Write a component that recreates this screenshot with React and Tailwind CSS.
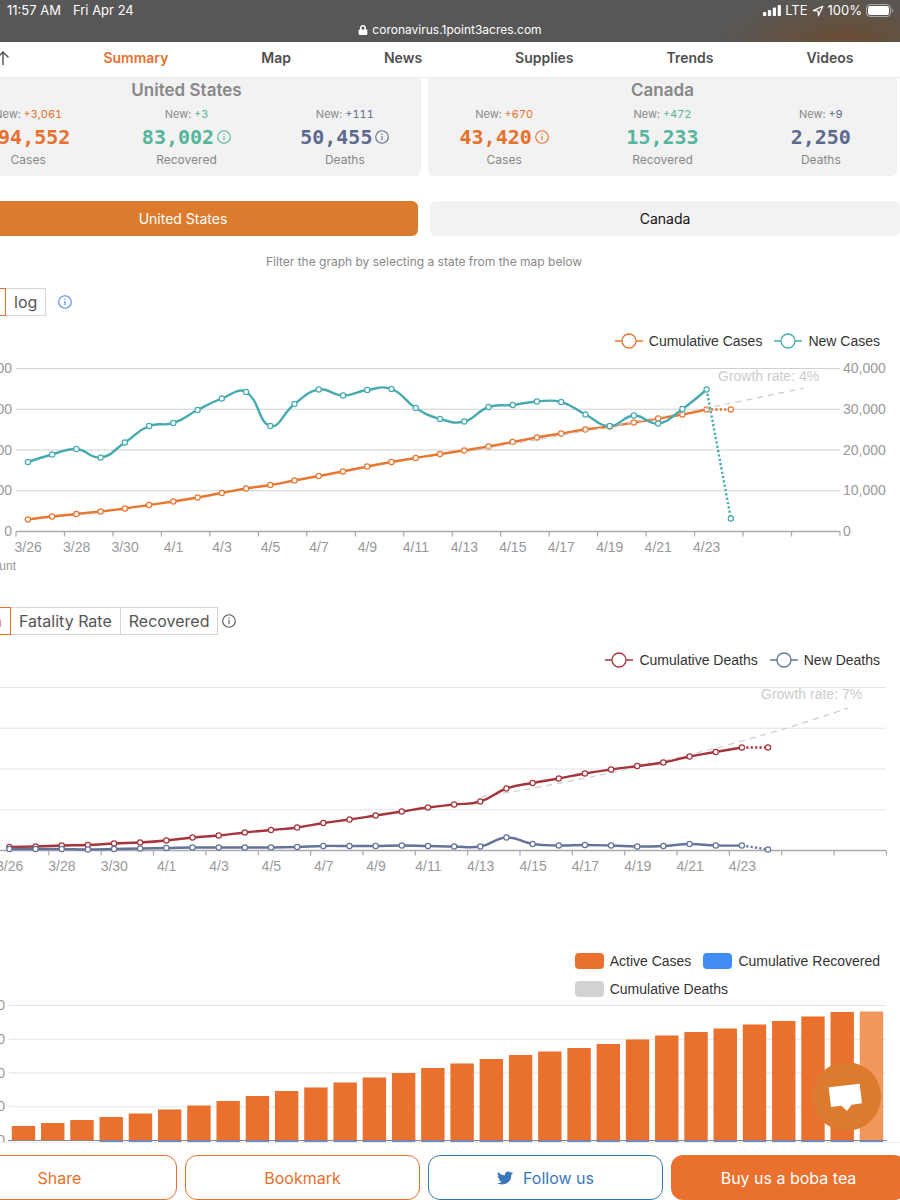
import { FaLock, FaTwitter } from "react-icons/fa";

const navItems = ["Summary", "Map", "News", "Supplies", "Trends", "Videos"];

const countries = [
  {
    name: "United States",
    stats: [
      { label: "Cases", added: "+3,061", total: "894,552", color: "text-[#e8702d]" },
      { label: "Recovered", added: "+3", total: "83,002", color: "text-[#55b59b]", info: true },
      { label: "Deaths", added: "+111", total: "50,455", color: "text-[#5d6a8f]", info: true },
    ],
  },
  {
    name: "Canada",
    stats: [
      { label: "Cases", added: "+670", total: "43,420", color: "text-[#e8702d]", info: true },
      { label: "Recovered", added: "+472", total: "15,233", color: "text-[#55b59b]" },
      { label: "Deaths", added: "+9", total: "2,250", color: "text-[#5d6a8f]" },
    ],
  },
];

const dates = [
  "3/26", "3/28", "3/30", "4/1", "4/3", "4/5", "4/7", "4/9",
  "4/11", "4/13", "4/15", "4/17", "4/19", "4/21", "4/23",
];

// heights above the x axis, one per day
const cumulativeCases = [
  12, 15, 17.5, 20, 23, 26.5, 30, 34, 38.5, 43, 46.5, 51, 55.5, 60, 65,
  69.5, 73.5, 77.5, 81, 85, 89.5, 94, 98, 102, 105, 109, 113, 117, 122, 122,
];
const newCases = [
  69.5, 77, 82.5, 74, 89, 105.5, 108.5, 121.5, 133, 139.5, 105.5, 127.5, 142, 136, 141.5,
  142.5, 123.5, 112.5, 110, 124.5, 126.5, 130, 129.5, 117, 105.5, 116, 108, 122.5, 142, 13,
];
const cumulativeDeaths = [
  3.5, 4, 5, 5.5, 7, 8, 10, 13, 15, 18, 20.5, 23, 27.5, 31, 35,
  39, 43, 46, 49, 62, 67.5, 72, 77, 81, 84.5, 88, 94, 98.5, 103, 103,
];
const newDeaths = [
  1.5, 1.5, 1.5, 1, 1.5, 2, 2.5, 3, 3, 3, 3, 3.5, 4.5, 4.5, 4.5,
  5, 4.5, 4, 4, 13, 6.5, 5, 5.5, 5, 4, 4.5, 6.5, 5, 5, 1,
];
const activeCases = [
  14.5, 17.5, 20.5, 23.5, 27, 31, 35, 39.5, 44.5, 49.5, 53, 58, 63, 67.5, 72.5,
  77, 81.5, 85.5, 89, 92.5, 96.5, 101, 105, 108.5, 112, 116, 119.5, 124, 128.5, 129,
];

const smoothPath = (pts) => {
  let d = `M${pts[0][0]},${pts[0][1]}`;
  let out = pts[0];
  for (let i = 1; i < pts.length; i++) {
    const prev = pts[i - 1];
    const p = pts[i];
    const next = pts[i + 1];
    if (!next) {
      d += ` C${out[0]},${out[1]} ${p[0]},${p[1]} ${p[0]},${p[1]}`;
      break;
    }
    const lenPrev = Math.hypot(p[0] - prev[0], p[1] - prev[1]);
    const lenNext = Math.hypot(next[0] - p[0], next[1] - p[1]);
    const ratio = lenNext / (lenNext + lenPrev);
    const [vx, vy] = [(next[0] - prev[0]) * 0.45, (next[1] - prev[1]) * 0.45];
    d += ` C${out[0]},${out[1]} ${p[0] - vx * (1 - ratio)},${p[1] - vy * (1 - ratio)} ${p[0]},${p[1]}`;
    out = [p[0] + vx * ratio, p[1] + vy * ratio];
  }
  return d;
};

const InfoIcon = ({ className = "" }) => (
  <svg viewBox="0 0 14 14" className={`size-[14px] shrink-0 ${className}`} fill="none" stroke="currentColor">
    <circle cx="7" cy="7" r="6.3" strokeWidth="1.1" />
    <path d="M7 6v4.2" strokeWidth="1.1" />
    <circle cx="7" cy="4.2" r="0.7" fill="currentColor" stroke="none" />
  </svg>
);

const StatusBar = () => (
  <header className="shrink-0 bg-[#575757] bg-[radial-gradient(130px_50px_at_94%_100%,#6b4d32,#575757)] text-white text-[13px]">
    <div className="flex items-center justify-between h-[21px] pl-[7px] pr-[6px]">
      <div className="flex gap-3">
        <span>11:57 AM</span>
        <span>Fri Apr 24</span>
      </div>
      <div className="flex items-center gap-1">
        <svg viewBox="0 0 18 11" className="w-[18px] h-[11px]" fill="currentColor">
          <rect x="0" y="7" width="3.2" height="4" rx="0.8" />
          <rect x="4.9" y="5" width="3.2" height="6" rx="0.8" />
          <rect x="9.8" y="2.6" width="3.2" height="8.4" rx="0.8" />
          <rect x="14.7" y="0" width="3.2" height="11" rx="0.8" />
        </svg>
        <span>LTE</span>
        <svg viewBox="0 0 12 12" className="size-[12px]" fill="none" stroke="currentColor" strokeWidth="1.2" strokeLinejoin="round">
          <path d="M10.8 1.2 1.2 5.6l4.9.4.3 4.8z" />
        </svg>
        <span>100%</span>
        <svg viewBox="0 0 28 13" className="w-[28px] h-[13px]" fill="none">
          <rect x="0.5" y="0.5" width="24" height="12" rx="3.5" stroke="#aaa" />
          <rect x="2" y="2" width="21" height="9" rx="2.2" fill="#fff" />
          <path d="M26 4.5c1.6.6 1.6 3.4 0 4z" fill="#aaa" />
        </svg>
      </div>
    </div>
    <div className="flex items-center justify-center gap-1 h-[21px] pb-1 text-xs">
      <FaLock className="size-[10px]" />
      <span>coronavirus.1point3acres.com</span>
    </div>
  </header>
);

const NavBar = () => (
  <nav className="shrink-0 -ml-[50px] flex items-center justify-around h-9 pb-1 border-b border-[#ececec] text-sm font-semibold text-[#4f4f4f]">
    <button aria-label="Back to top">
      <svg viewBox="0 0 14 16" className="w-[14px] h-[16px]" fill="none" stroke="currentColor" strokeWidth="1.4">
        <path d="M7 15V2M1.5 7.5 7 2l5.5 5.5" />
      </svg>
    </button>
    {navItems.map((item, i) => (
      <a key={item} href="#" className={i === 0 ? "text-[#e8702d]" : ""}>
        {item}
      </a>
    ))}
  </nav>
);

const CountryCard = ({ country }) => (
  <div className="h-[98px] bg-[#f2f2f2] rounded-b-md text-center text-[#888]">
    <h2 className="text-[17px] leading-6 font-semibold">{country.name}</h2>
    <div className="-mx-[3px] grid grid-cols-3">
      {country.stats.map((s) => (
        <div key={s.label}>
          <p className="text-[11px] leading-6 tabular-nums">
            New: <span className={s.color}>{s.added}</span>
          </p>
          <p className={`flex items-center justify-center gap-[3px] h-[22px] ${s.color}`}>
            <span className="font-['DejaVu_Sans_Mono',monospace] text-xl font-bold">{s.total}</span>
            {s.info && <InfoIcon />}
          </p>
          <p className="text-xs leading-6">{s.label}</p>
        </div>
      ))}
    </div>
  </div>
);

const LineLegend = ({ items }) => (
  <div className="flex justify-end gap-3 pr-5 h-5 font-['Liberation_Sans',Arial,sans-serif] text-sm leading-5 text-[#333]">
    {items.map(({ label, color }) => (
      <button key={label} className="flex items-center gap-[6px]">
        <svg viewBox="0 0 28 16" className="w-7 h-4" stroke={color} fill="#fff">
          <path d="M0 8h28" strokeWidth="1.5" />
          <circle cx="14" cy="8" r="7" strokeWidth="1.3" />
        </svg>
        {label}
      </button>
    ))}
  </div>
);

const BarLegendItem = ({ label, color }) => (
  <button className="flex items-center gap-[6px]">
    <span className={`w-[29px] h-4 rounded-[4px] ${color}`} />
    {label}
  </button>
);

const Series = ({ values, color, x0, step, base }) => {
  const pts = values.map((v, i) => [x0 + step * i, base - v]);
  const [last, today] = pts.slice(-2);
  return (
    <g stroke={color} fill="none">
      <path d={smoothPath(pts.slice(0, -1))} strokeWidth="2.4" />
      <path d={`M${last} L${today}`} strokeWidth="2.4" strokeDasharray="2.2 2.2" />
      {pts.map(([x, y]) => (
        <circle key={x} cx={x} cy={y} r="2.6" fill="#fff" strokeWidth="1.2" />
      ))}
    </g>
  );
};

const Axes = ({ x1, x2, tick0, step, base, gap, grid }) => (
  <>
    {[1, 2, 3, 4].map((n) => (
      <path key={n} d={`M${x1} ${base - gap * n}H${x2}`} stroke={grid} strokeWidth="1.2" />
    ))}
    <path d={`M${x1} ${base}H${x2}`} stroke="#aaa" strokeWidth="1.3" />
    {Array.from({ length: 18 }, (_, i) => (
      <path key={i} d={`M${tick0 + step * i} ${base}v5`} stroke="#aaa" strokeWidth="1.2" />
    ))}
    {dates.map((d, i) => (
      <text key={d} x={tick0 + step * (i + 0.25)} y={base + 20.5} textAnchor="middle">
        {d}
      </text>
    ))}
  </>
);

const chartClass = "block w-full font-['Liberation_Sans',Arial,sans-serif] text-sm";

const CasesChart = () => (
  <svg viewBox="0 0 900 229" className={chartClass} fill="#999">
    <Axes x1={16} x2={840} tick0={16} step={48.47} base={180.5} gap={40.75} grid="#d0d0d0" />
    {["0", "300,000", "600,000", "900,000", "1,200,000"].map((t, i) => (
      <text key={t} x="12" y={185 - 40.75 * i} textAnchor="end">{t}</text>
    ))}
    {["0", "10,000", "20,000", "30,000", "40,000"].map((t, i) => (
      <text key={t} x="843" y={185 - 40.75 * i}>{t}</text>
    ))}
    <text x="16" y="219" textAnchor="end" className="text-xs">Count</text>
    <Series values={cumulativeCases} color="#e8762f" x0={27.9} step={24.24} base={180.5} />
    <path d="M465 101Q640 72 804 37" fill="none" stroke="#ccc" strokeWidth="1.2" strokeDasharray="6 5" />
    <Series values={newCases} color="#45abb0" x0={27.9} step={24.24} base={180.5} />
    <text x="718" y="30" fill="#ccc">Growth rate: 4%</text>
  </svg>
);

const DeathsChart = () => (
  <svg viewBox="0 0 900 210" className={chartClass} fill="#999">
    <Axes x1={-4} x2={886} tick0={-3.5} step={52.35} base={180.5} gap={40.75} grid="#e4e4e4" />
    <path d="M481 127Q690 93 848 38" fill="none" stroke="#ccc" strokeWidth="1.2" strokeDasharray="6 5" />
    <Series values={cumulativeDeaths} color="#a5343c" x0={9.4} step={26.16} base={180.5} />
    <Series values={newDeaths} color="#64739a" x0={9.4} step={26.16} base={180.5} />
    <text x="761" y="29" fill="#ccc">Growth rate: 7%</text>
  </svg>
);

const ActiveChart = () => (
  <svg viewBox="0 0 900 143" className={chartClass} fill="#999">
    {["0", "200,000", "400,000", "600,000", "800,000"].map((t, i) => (
      <g key={t}>
        <path d={`M9 ${141.5 - 33.75 * i}H886`} stroke="#e4e4e4" strokeWidth="1.2" />
        <text x="5" y={146 - 33.75 * i} textAnchor="end">{t}</text>
      </g>
    ))}
    {activeCases.map((v, i) => (
      <g key={i}>
        <rect x={11.8 + 29.24 * i} y={141.5 - v} width="23.4" height={v} fill={i === 29 ? "#f0985c" : "#ea702d"} />
        {i > 2 && <rect x={11.8 + 29.24 * i} y="141" width="23.4" height="2" fill="#5a8be0" />}
      </g>
    ))}
    <path d="M8 141.5H887" stroke="#8a8580" />
  </svg>
);

const Segment = ({ children, active }) => (
  <button
    className={`h-7 px-2 border text-base leading-none ${
      active
        ? "relative w-16 text-right border-[#e8702d] text-[#e8702d]"
        : "-ml-px border-[#d5d5d5] text-[#555]"
    }`}
  >
    {children}
  </button>
);

const Footer = () => (
  <footer className="shrink-0 border-t border-[#ececec] bg-white pt-3">
    <div className="-ml-[58px] -mr-[6px] grid grid-cols-4 gap-2 text-base">
      <button className="h-[45px] rounded-xl border border-[#e8702d] text-[#e8702d]">Share</button>
      <button className="h-[45px] rounded-xl border border-[#e8702d] text-[#e8702d]">Bookmark</button>
      <a href="#" className="h-[45px] rounded-xl border border-[#3878b8] text-[#3878b8] flex items-center justify-center gap-[10px]">
        <FaTwitter className="size-4" />
        Follow us
      </a>
      <button className="h-[45px] rounded-xl bg-[#ea702d] text-white">Buy us a boba tea</button>
    </div>
  </footer>
);

const App = () => {
  return (
    <div className="relative h-screen flex flex-col overflow-hidden bg-white font-[Inter,sans-serif]">
      <StatusBar />
      <NavBar />
      <main className="flex-1 min-h-0 overflow-hidden">
        <section className="-ml-12 mr-[3px] grid grid-cols-2 gap-[7px]">
          {countries.map((c) => (
            <CountryCard key={c.name} country={c} />
          ))}
        </section>

        <div className="-ml-[52px] mt-[25px] grid grid-cols-2 gap-3 text-sm">
          <button className="h-[35px] rounded-md bg-[#dc7b2d] text-white">United States</button>
          <button className="h-[35px] rounded-md bg-[#f2f2f2] text-[#111]">Canada</button>
        </div>
        <p className="-ml-[52px] mt-4 text-center text-xs leading-5 text-[#888]">
          Filter the graph by selecting a state from the map below
        </p>

        <section className="mt-4">
          <div className="-ml-[58px] flex items-center">
            <Segment active>linear</Segment>
            <Segment>log</Segment>
            <InfoIcon className="ml-3 text-[#4f86ea]" />
          </div>
          <div className="mt-[15px]">
            <LineLegend
              items={[
                { label: "Cumulative Cases", color: "#e8762f" },
                { label: "New Cases", color: "#45abb0" },
              ]}
            />
          </div>
          <CasesChart />
        </section>

        <section className="mt-[27px]">
          <div className="-ml-[53px] flex items-center">
            <Segment active>Death</Segment>
            <Segment>Fatality Rate</Segment>
            <Segment>Recovered</Segment>
            <InfoIcon className="ml-1 text-[#555]" />
          </div>
          <div className="mt-[15px]">
            <LineLegend
              items={[
                { label: "Cumulative Deaths", color: "#a5343c" },
                { label: "New Deaths", color: "#64739a" },
              ]}
            />
          </div>
          <DeathsChart />
        </section>

        <section className="mt-[71px]">
          <div className="ml-auto mr-5 w-fit flex flex-col items-start gap-2 font-['Liberation_Sans',Arial,sans-serif] text-sm leading-5 text-[#333]">
            <div className="flex gap-3">
              <BarLegendItem label="Active Cases" color="bg-[#ea702d]" />
              <BarLegendItem label="Cumulative Recovered" color="bg-[#428df5]" />
            </div>
            <BarLegendItem label="Cumulative Deaths" color="bg-[#d2d2d2]" />
          </div>
          <ActiveChart />
        </section>
      </main>
      <Footer />

      <button
        aria-label="Chat"
        className="absolute right-[19px] bottom-[69px] size-[69px] rounded-full bg-[#dc7b2d]"
      >
        <svg viewBox="0 0 207 207" className="size-full" fill="#fff">
          <path d="M50 76 143 65 150 124 119 128 105 147 88 131 57 135z" />
        </svg>
      </button>
    </div>
  );
};

export default App;
